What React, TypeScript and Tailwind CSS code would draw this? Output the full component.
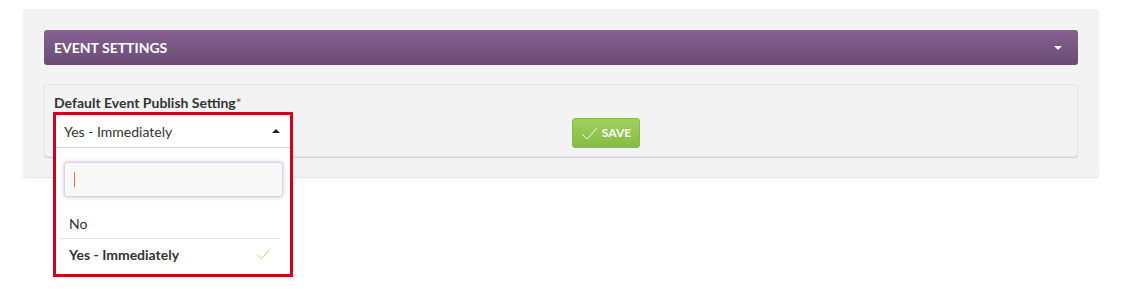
import React from 'react'

const font = { fontFamily: 'Lato, "Open Sans", sans-serif' }

export default function App() {
  return (
    <div className="w-[1130px] h-[289px] bg-white overflow-hidden" style={font}>
      {/* outer panel */}
      <div className="ml-[23px] mt-[9px] w-[1076px] h-[168px] bg-[#f3f3f3] rounded-[3px] shadow-[0_1px_1px_rgba(0,0,0,0.12)] px-[21px] pt-[21px]">
        {/* header */}
        <div className="h-[35px] rounded-[3px] bg-gradient-to-b from-[#876192] to-[#6a4b75] flex items-center justify-between pl-[10px] pr-[16px]">
          <span className="text-white text-[14px] font-bold">EVENT SETTINGS</span>
          <span className="w-0 h-0 border-l-[4px] border-r-[4px] border-t-[4px] border-l-transparent border-r-transparent border-t-white" />
        </div>

        {/* inner card */}
        <div className="mt-[19px] h-[73px] rounded-[3px] border border-[#e6e6e6] bg-[#f3f3f3] shadow-[0_1px_1px_rgba(0,0,0,0.15)] pt-[9px] flex">
          <div className="w-[250px] shrink-0">
            <div className="ml-[9px] text-[14px] leading-[18px] font-bold text-[#333]">
              Default Event Publish Setting<span className="text-[#c9302c] font-normal">*</span>
            </div>
            {/* select + dropdown, outlined */}
            <div className="relative z-10 ml-[8px] w-[240px] border-[3px] border-[#d0021b] bg-white">
              <div className="h-[33px] border-b border-[#d4d4d4] flex items-center justify-between pl-[8px] pr-[10px]">
                <span className="text-[14px] text-[#333]">Yes - Immediately</span>
                <span className="w-0 h-0 border-l-[4px] border-r-[4px] border-b-[4px] border-l-transparent border-r-transparent border-b-[#222]" />
              </div>
              <div className="h-[126px] pt-[14px]">
                <div className="mx-[8px] mr-[7px] h-[35px] rounded-[3px] border border-[#dcd2e2] bg-[#f8f8f8] shadow-[0_0_4px_rgba(120,80,140,0.35)] flex items-center pl-[9px]">
                  <span className="w-[1px] h-[15px] bg-[#e8762c]" />
                </div>
                <div className="mx-[3px] mr-[10px] mt-[11px]">
                  <div className="h-[31px] flex items-center pl-[10px] text-[14px] text-[#333] border-b border-[#e3e3e3]">No</div>
                  <div className="h-[31px] flex items-center justify-between pl-[10px] pr-[10px] text-[14px] font-bold text-[#333]">
                    <span>Yes - Immediately</span>
                    <svg width="13" height="11" viewBox="0 0 13 11" fill="none">
                      <path d="M0.5 6 L4.5 10 L12.5 0.5" stroke="#a8d98a" strokeWidth="1" />
                    </svg>
                  </div>
                </div>
              </div>
            </div>
          </div>
          <div className="ml-[277px] mt-[24px]">
            <button className="h-[30px] w-[68px] rounded-[3px] bg-gradient-to-b from-[#9fd062] to-[#84bd40] border border-[#86b94a] flex items-center justify-center gap-[4px] text-white text-[12px] font-bold">
              <svg width="17" height="13" viewBox="0 0 17 13" fill="none">
                <path d="M1 7 L6 12 L16 1" stroke="#f2ffe6" strokeWidth="1" />
              </svg>
              SAVE
            </button>
          </div>
        </div>
      </div>
    </div>
  )
}
